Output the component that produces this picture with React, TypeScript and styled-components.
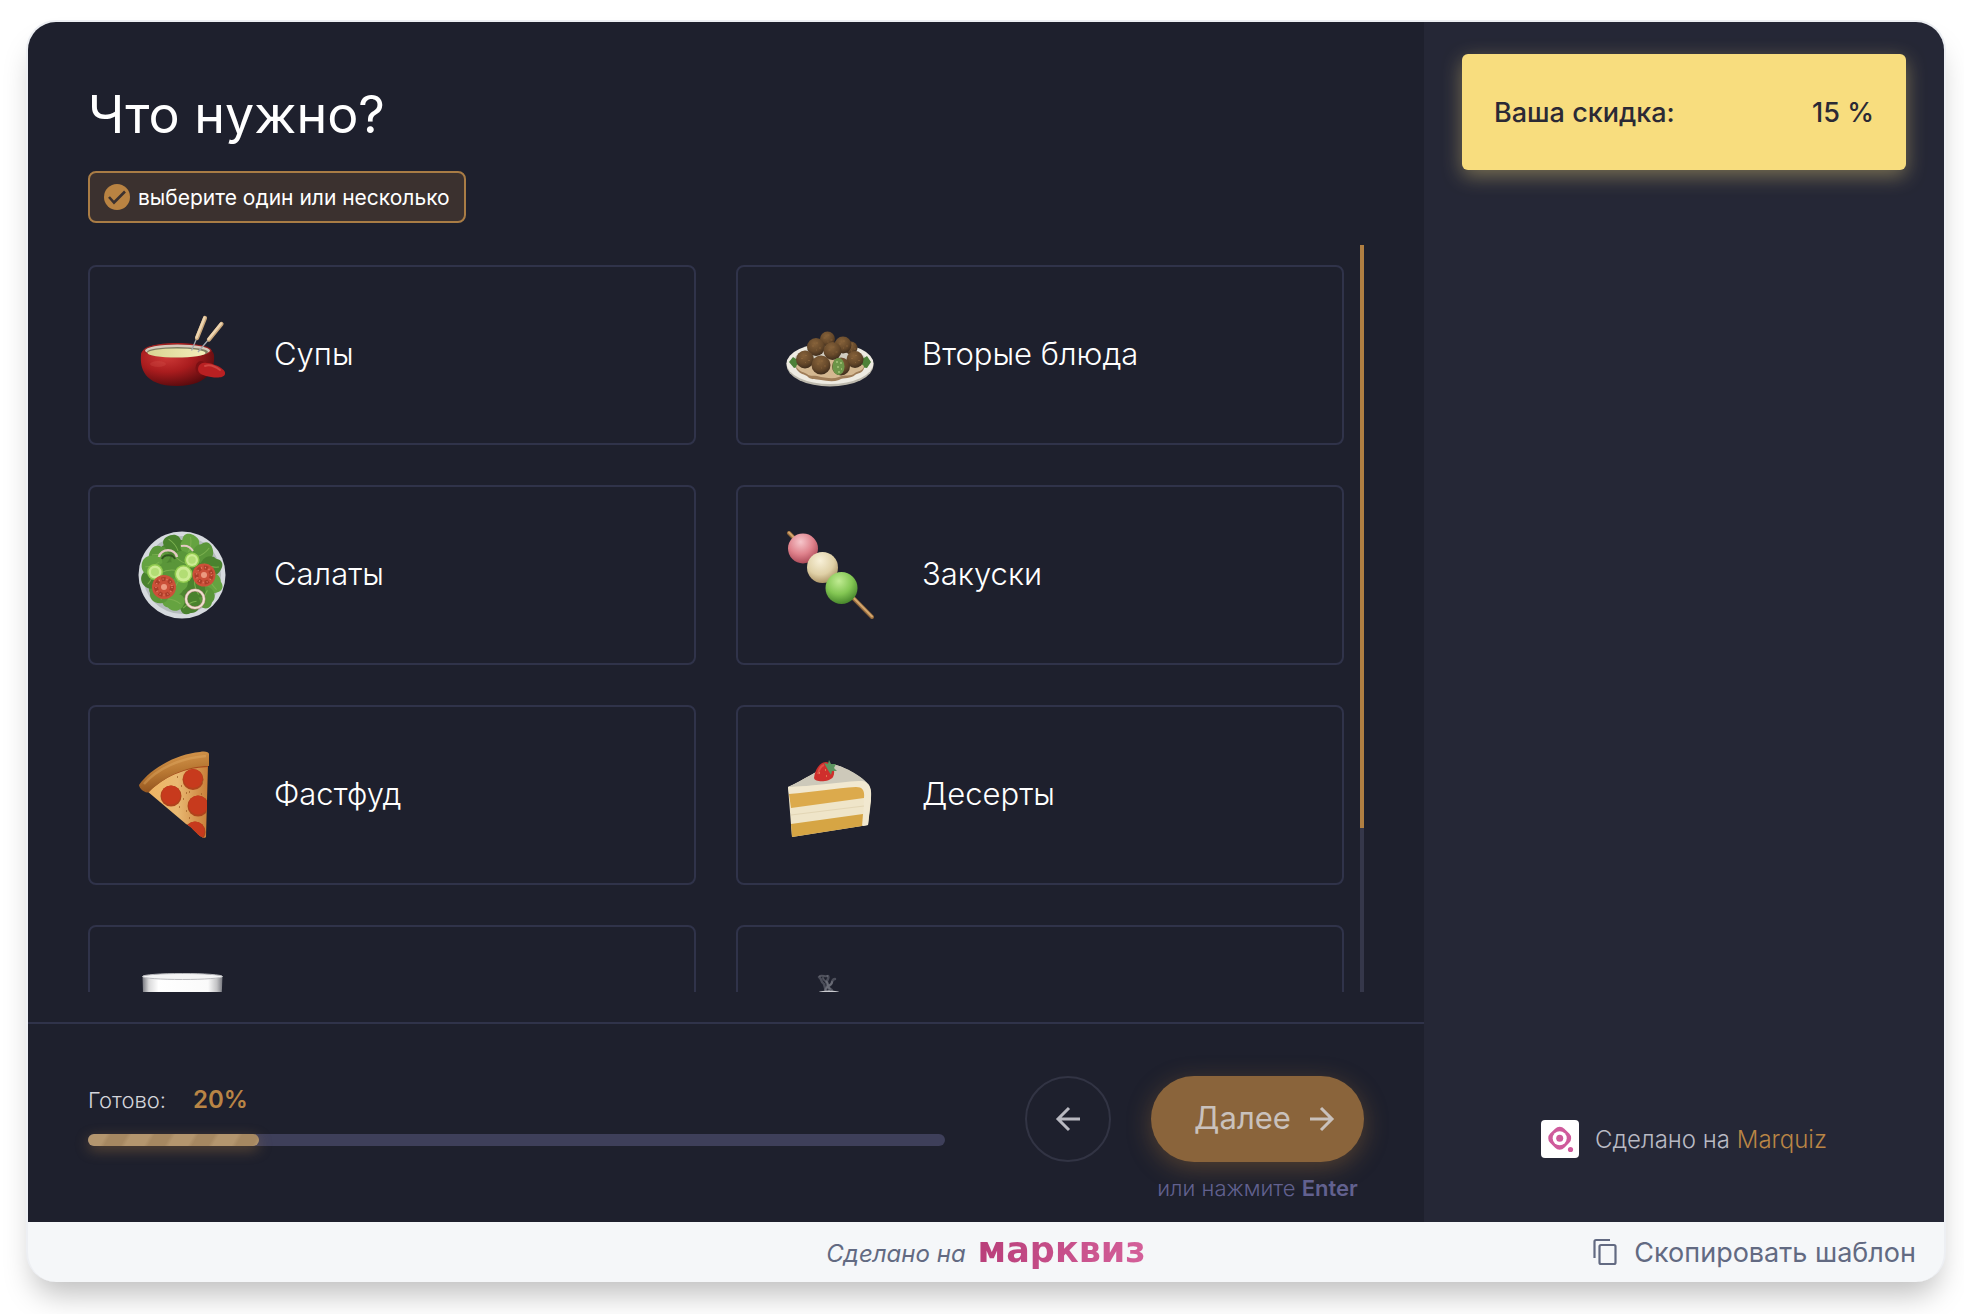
import React, { useState } from 'react';
import styled, { createGlobalStyle } from 'styled-components';

const color = {
  main: '#1e202d',
  side: '#252736',
  line: '#30334a',
  gold: '#b98545',
  muted: '#b9bac4',
  hint: '#62618f',
  slate: '#626a82',
};

const GlobalStyle = createGlobalStyle`
  * { box-sizing: border-box; }
  body {
    margin: 0;
    background: #fff;
    font-family: Inter, "Liberation Sans", sans-serif;
  }
  button { font-family: inherit; cursor: pointer; }
`;

const Page = styled.div`
  display: flex;
  height: 100vh;
  min-height: 700px;
  padding: 20px 18px 32px 26px;
`;

const Window = styled.div`
  flex: 1;
  min-width: 0;
  display: flex;
  flex-direction: column;
  overflow: hidden;
  border: 2px solid #edeff3;
  border-bottom: 0;
  border-radius: 30px;
  background: #f5f7f9;
  box-shadow: 0 20px 30px -8px rgba(0, 0, 0, 0.26);
`;

const Quiz = styled.div`
  flex: 1;
  min-height: 0;
  display: grid;
  grid-template-columns: minmax(0, 1fr) 520px;
`;

const Main = styled.main`
  min-height: 0;
  display: flex;
  flex-direction: column;
  background: ${color.main};
`;

const Question = styled.section`
  flex: 1;
  min-height: 0;
  display: flex;
  flex-direction: column;
  align-items: flex-start;
  padding: 60px 60px 30px;
`;

const Title = styled.h1`
  margin: 0 0 24px;
  font-size: 52px;
  font-weight: 400;
  line-height: 65px;
  color: #fff;
`;

const Hint = styled.div`
  display: flex;
  align-items: center;
  gap: 8px;
  height: 52px;
  margin-bottom: 22px;
  padding: 0 14px;
  border: 2px solid #a97c45;
  border-radius: 8px;
  background: #3b312f;
  font-size: 21px;
  color: #fff;
  svg { flex: none; }
`;

const ScrollBox = styled.div`
  align-self: stretch;
  flex: 1;
  min-height: 0;
  display: flex;
  gap: 16px;
`;

const Options = styled.div`
  flex: 1;
  display: grid;
  grid-template-columns: 1fr 1fr;
  grid-auto-rows: 180px;
  gap: 40px;
  padding: 20px 0;
  overflow-y: auto;
  scrollbar-width: none;
`;

const Track = styled.div`
  width: 4px;
  background: #35374a;
`;

const Thumb = styled.div`
  height: 78%;
  background: #b07f42;
`;

const Option = styled.label`
  display: flex;
  align-items: center;
  gap: 48px;
  padding: 0 48px;
  border: 2px solid ${color.line};
  border-radius: 8px;
  font-size: 31px;
  font-weight: 300;
  color: #fff;
  cursor: pointer;
  &:has(input:checked) { border-color: ${color.gold}; }
`;

const OptionText = styled.span`
  padding-bottom: 4px;
`;

const HiddenCheck = styled.input`
  position: absolute;
  width: 1px;
  height: 1px;
  margin: 0;
  opacity: 0;
  pointer-events: none;
`;

const Picture = styled.svg`
  flex: none;
  width: 88px;
  height: 88px;
`;

const Nav = styled.nav`
  display: flex;
  align-items: flex-start;
  padding: 52px 60px 20px;
  border-top: 2px solid ${color.line};
`;

const Progress = styled.div`
  flex: 1;
  margin-right: 80px;
  padding-top: 8px;
`;

const ProgressText = styled.div`
  display: flex;
  align-items: baseline;
  gap: 27px;
  margin-bottom: 18px;
  font-size: 22px;
  font-weight: 300;
  line-height: 32px;
  color: #d4d5db;
`;

const Percent = styled.strong`
  font-size: 24px;
  font-weight: 600;
  color: ${color.gold};
`;

const Bar = styled.div`
  height: 12px;
  border-radius: 6px;
  background: #3e3f5a;
`;

const BarFill = styled.div`
  height: 100%;
  border-radius: 6px;
  background: repeating-linear-gradient(120deg, #b4966e 0 16px, #a68861 20px 34px, #b4966e 38px);
  box-shadow: 0 4px 14px rgba(185, 133, 69, 0.4);
`;

const BackButton = styled.button`
  display: grid;
  place-items: center;
  width: 86px;
  height: 86px;
  margin-right: 40px;
  padding: 0;
  border: 2px solid #323444;
  border-radius: 50%;
  background: transparent;
  color: #b9b9c1;
`;

const NextBlock = styled.div`
  display: flex;
  flex-direction: column;
  align-items: center;
  gap: 12px;
`;

const NextButton = styled.button`
  display: flex;
  align-items: center;
  justify-content: center;
  gap: 18px;
  width: 213px;
  height: 86px;
  padding: 0 14px 0 28px;
  border: 0;
  border-radius: 43px;
  background: #8a643b;
  box-shadow: 0 6px 24px rgba(185, 125, 55, 0.34);
  font-size: 31px;
  font-weight: 400;
  color: #c9c1bc;
  svg { flex: none; }
`;

const EnterHint = styled.div`
  font-size: 22px;
  font-weight: 300;
  line-height: 28px;
  white-space: nowrap;
  color: ${color.hint};
  strong { font-weight: 600; }
`;

const Side = styled.aside`
  display: flex;
  flex-direction: column;
  align-items: center;
  justify-content: space-between;
  padding: 32px 38px 64px;
  background: ${color.side};
`;

const Discount = styled.div`
  align-self: stretch;
  display: flex;
  align-items: center;
  justify-content: space-between;
  height: 116px;
  padding: 0 32px;
  border-radius: 6px;
  background: #f8dd7e;
  box-shadow: 0 6px 20px rgba(248, 221, 126, 0.4);
  font-size: 27px;
  font-weight: 500;
  color: #2b2935;
`;

const Brand = styled.div`
  display: flex;
  align-items: center;
  gap: 16px;
  font-size: 24px;
  font-weight: 300;
  color: ${color.muted};
  a { color: ${color.gold}; text-decoration: none; }
`;

const Footer = styled.footer`
  display: grid;
  grid-template-columns: 1fr auto 1fr;
  align-items: center;
  height: 60px;
  padding: 0 28px;
  color: ${color.slate};
`;

const MadeWith = styled.div`
  grid-column: 2;
  display: flex;
  align-items: baseline;
  gap: 12px;
  padding-bottom: 4px;
  font-size: 24px;
  font-style: italic;
`;

const Wordmark = styled.a`
  font-family: "DejaVu Sans", sans-serif;
  font-size: 35px;
  font-style: normal;
  font-weight: 700;
  line-height: 42px;
  text-decoration: none;
  background: linear-gradient(90deg, #b93f7a, #d4609a);
  background-clip: text;
  color: transparent;
`;

const CopyButton = styled.button`
  justify-self: end;
  display: flex;
  align-items: center;
  gap: 16px;
  padding: 0;
  border: 0;
  background: none;
  font-size: 27px;
  color: ${color.slate};
`;

function Arrow({ back }: { back?: boolean }) {
  return (
    <svg width="26" height="26" viewBox="0 0 26 26" fill="none" stroke="currentColor" strokeWidth="3">
      {back ? <path d="M14 2 3 13l11 11M3 13h22" /> : <path d="m12 2 11 11-11 11M23 13H1" />}
    </svg>
  );
}

function CheckMark() {
  return (
    <svg width="26" height="26" viewBox="0 0 26 26">
      <circle cx="13" cy="13" r="13" fill="#b98342" />
      <path d="m5 13 5 5.500L21 7.500" fill="none" stroke="#3b312f" strokeWidth="2.600" />
    </svg>
  );
}

function Soup() {
  return (
    <Picture viewBox="0 0 88 88">
      <defs>
        <radialGradient id="pot" cx="0.35" cy="0.3" r="0.75">
          <stop offset="0" stopColor="#cf3b38" />
          <stop offset="0.5" stopColor="#a91c1e" />
          <stop offset="1" stopColor="#560a0d" />
        </radialGradient>
        <linearGradient id="broth" x1="0" x2="1">
          <stop offset="0" stopColor="#d9d592" />
          <stop offset="1" stopColor="#f3eebb" />
        </linearGradient>
      </defs>
      <path d="M3 44c0-8 15-12 36-12s36 4 37 12c1 11-3 31-37 31S2 56 3 44Z" fill="url(#pot)" />
      <ellipse cx="39.500" cy="39.500" rx="34" ry="7" fill="#9d2020" />
      <ellipse cx="39.500" cy="39.500" rx="32.500" ry="6" fill="#d5c9bb" />
      <ellipse cx="39.500" cy="41" rx="30.500" ry="5" fill="#7f7d60" />
      <ellipse cx="38.500" cy="42" rx="29" ry="4.500" fill="url(#broth)" />
      <path d="m53.500 39.500 6-14M60 41l11-13" stroke="#a2a5ac" strokeWidth="1.300" />
      <path d="m59 27 8-20M71 28.500 83.500 13" stroke="#c9a67a" strokeWidth="4.200" strokeLinecap="round" />
      <path d="m58.500 26.500 8-20M70.500 28 83 12.500" stroke="#edd5b0" strokeWidth="2.500" strokeLinecap="round" />
      <ellipse cx="63" cy="57" rx="5.500" ry="7" fill="#7c1014" />
      <path d="M60 58c1-8 9-7 17-4 6 2 11 6 10 9-1 4-8 4-14 3-7-1-13-3-13-8Z" fill="#b92022" />
      <path d="M67 55c5-2 11 1 15 4" stroke="#cf4440" strokeWidth="2" fill="none" strokeLinecap="round" />
      <ellipse cx="20" cy="53" rx="8" ry="3" fill="#e0635c" opacity="0.2" />
    </Picture>
  );
}

const balls = [
  [65, 37, 6.5], [41.5, 28, 7.5], [57, 34, 8.5], [30, 36, 9], [46.5, 40, 9],
  [19, 48.5, 9], [69, 48.5, 8.5], [35, 54, 9.5],
];

function Meatballs() {
  return (
    <Picture viewBox="0 0 88 88">
      <defs>
        <radialGradient id="meat" cx="0.42" cy="0.3" r="0.75">
          <stop offset="0" stopColor="#86623a" />
          <stop offset="0.6" stopColor="#65482a" />
          <stop offset="1" stopColor="#38281a" />
        </radialGradient>
      </defs>
      <ellipse cx="44" cy="54" rx="43.500" ry="21.500" fill="#bdb9ad" />
      <ellipse cx="44" cy="52.500" rx="43.500" ry="20.500" fill="#eeebe2" />
      <ellipse cx="44" cy="51" rx="37" ry="16" fill="#d0ccc0" />
      <path d="m3 51 4-5 3 2 5-3v10l-7 2ZM85 51l-4-6-3 2-4-3v12l7 1Z" fill="#4d8138" />
      <path d="M10 57c7-10 60-10 68 0-1 5-6 5-9 7-4 4-11 2-16 5-6 2-12 1-18 0-5-1-11 0-14-4-4-2-9-3-11-8Z" fill="#9f7d58" />
      <path d="M10 55c7-9 60-9 68 0-1 5-6 5-9 7-4 4-11 1-16 4-6 2-12 1-18 0-5-2-11 0-14-3-4-2-9-3-11-8Z" fill="#d4b891" />
      {balls.map(([x, y, r]) => (
        <g key={`${x}-${y}`}>
          <circle cx={x} cy={y} r={r} fill="url(#meat)" />
          <path d={`M${x - 4} ${y - 1}h2m2-3h2m1 5h2m-5 2h1`} stroke="#9b7142" strokeWidth="1" opacity="0.5" />
        </g>
      ))}
      <circle cx="55" cy="55.500" r="9" fill="url(#meat)" />
      <ellipse cx="52.500" cy="55.500" rx="6" ry="8.500" fill="#6c9548" />
      <path d="M50 51h2m2 1h2m-5 4h2m2 2h1m-4 3h2" stroke="#a5c47b" strokeWidth="1.500" />
    </Picture>
  );
}

const leaves = [
  [22, 24], [36, 14], [52, 14], [65, 22], [73, 35], [74, 52], [67, 66], [52, 73],
  [36, 70], [21, 62], [13, 47], [14, 34], [44, 30], [58, 56], [40, 52], [30, 40],
];

function Salad() {
  return (
    <Picture viewBox="0 0 88 88">
      <circle cx="44" cy="44" r="43.500" fill="#d6dade" />
      <circle cx="44" cy="44" r="39" fill="#b5bcbd" />
      <circle cx="44" cy="43" r="34" fill="#4d8530" />
      {leaves.map(([x, y], i) => (
        <g key={i} transform={`rotate(${i * 47} ${x} ${y})`}>
          <path
            d={`M${x - 11} ${y}c2-8 7-11 13-8 8 0 10 6 8 11-3 7-10 8-14 5-5 0-8-3-7-8Z`}
            fill={['#5a9639', '#4a822e', '#65a340'][i % 3]}
          />
          <path d={`M${x - 8} ${y}q8-2 15 1`} stroke="#7bb04f" strokeWidth="1" fill="none" />
        </g>
      ))}
      <path d="M21 26c2-9 16-9 18 0" stroke="#e4c9c4" strokeWidth="2.500" fill="none" />
      <path d="M24 28c2-5 11-5 13 0" stroke="#31551f" strokeWidth="2" fill="none" />
      <path d="M43 15c5-1 9 0 12 5" stroke="#e4c9c4" strokeWidth="2" fill="none" />
      {[[17, 41, 8], [54, 29, 7.5], [45.5, 43, 9]].map(([x, y, r]) => (
        <g key={x}>
          <circle cx={x} cy={y} r={r} fill="#92cc4f" />
          <circle cx={x} cy={y} r={r - 1.5} fill="#cdec94" />
          <circle cx={x} cy={y} r={r / 2} fill="#b2dd74" />
        </g>
      ))}
      {[[26, 56, 12], [66, 44, 11.5]].map(([x, y, r]) => (
        <g key={x}>
          <circle cx={x} cy={y} r={r} fill="#cb5039" />
          <circle cx={x} cy={y} r={r - 4} fill="none" stroke="#ab3d29" strokeWidth="4" strokeDasharray="4 3" />
          <circle cx={x} cy={y} r={r - 4} fill="none" stroke="#e0826a" strokeWidth="1.500" strokeDasharray="1 3" />
          <circle cx={x} cy={y} r="3" fill="#ec9a80" />
        </g>
      ))}
      <circle cx="57" cy="68" r="9" fill="none" stroke="#bd8f8f" strokeWidth="3" />
      <circle cx="57" cy="68" r="9" fill="none" stroke="#efe2cf" strokeWidth="2" />
    </Picture>
  );
}

function Dango() {
  return (
    <Picture viewBox="0 0 88 88">
      <defs>
        <radialGradient id="pink" cx="0.42" cy="0.28" r="0.75">
          <stop offset="0" stopColor="#f6c6cb" /><stop offset="0.55" stopColor="#df828c" /><stop offset="1" stopColor="#a94655" />
        </radialGradient>
        <radialGradient id="cream" cx="0.42" cy="0.28" r="0.75">
          <stop offset="0" stopColor="#f8f0d8" /><stop offset="0.6" stopColor="#dfd0a6" /><stop offset="1" stopColor="#a99062" />
        </radialGradient>
        <radialGradient id="green" cx="0.42" cy="0.28" r="0.75">
          <stop offset="0" stopColor="#c0eb92" /><stop offset="0.55" stopColor="#83c653" /><stop offset="1" stopColor="#438229" />
        </radialGradient>
      </defs>
      <path d="m3 2 83 84" stroke="#93683b" strokeWidth="4" strokeLinecap="round" />
      <path d="m3 1.500 83 84" stroke="#d2a56c" strokeWidth="2" strokeLinecap="round" />
      <circle cx="17" cy="17.500" r="15" fill="url(#pink)" />
      <circle cx="36.500" cy="36.500" r="15.500" fill="url(#cream)" />
      <circle cx="55.500" cy="57" r="16" fill="url(#green)" />
    </Picture>
  );
}

function Pizza() {
  return (
    <Picture viewBox="0 0 88 88">
      <defs>
        <linearGradient id="crust" x1="0.3" y1="0" x2="0.55" y2="1">
          <stop offset="0" stopColor="#d99b50" /><stop offset="0.5" stopColor="#b87732" /><stop offset="1" stopColor="#8b4d1b" />
        </linearGradient>
        <linearGradient id="cheese" x1="0" x2="1">
          <stop offset="0" stopColor="#f0b563" /><stop offset="0.5" stopColor="#e9b972" /><stop offset="1" stopColor="#c97e38" />
        </linearGradient>
        <clipPath id="slice"><path d="M9 40C25 24 45 14 70 13l-2 73c-2 2-4 0-6-1-5-4-8-9-14-12Z" /></clipPath>
      </defs>
      <path d="M9 40C25 24 45 14 70 13l-2 73c-2 2-4 0-6-1-5-4-8-9-14-12Z" fill="url(#cheese)" />
      <g clipPath="url(#slice)">
        <path d="M8 42c17-17 36-26 64-27" stroke="#a84c1c" strokeWidth="2" fill="none" />
        {[[55, 27.5], [33, 44], [60, 54], [57, 80]].map(([x, y]) => (
          <g key={y}>
            <circle cx={x} cy={y + 1} r="10.500" fill="#b0431c" />
            <circle cx={x} cy={y} r="9.500" fill="#c73a1d" />
          </g>
        ))}
        <path d="M43 35h1m4 7h1m-4 6h1m-5 8h1m6 4h1m2 7h1m11-24h1m-21-8h1m26 27h1m-20-21h1m-13-15h1m24 5h1" stroke="#a2632a" strokeWidth="1.300" />
      </g>
      <path d="M1 34C12 18 38 3 62 1c5-1 9 0 9 2v12C48 15 27 25 11 41c-4 2-10-4-10-7Z" fill="url(#crust)" />
      <path d="M6 33C19 18 42 7 68 5" stroke="#e8b46d" strokeWidth="2.500" fill="none" opacity="0.35" />
    </Picture>
  );
}

function Cake() {
  return (
    <Picture viewBox="0 0 88 88">
      <path d="M2 36c16-7 30-18 46-22 5-1 30 12 35 21 3 5 2 8 2 15l-3 24-76 12Z" fill="#efe5c9" />
      <path d="M2 36c16-7 30-18 46-22 5-1 27 10 33 18-24 1-53 3-79 4Z" fill="#cdc9ba" />
      <path d="M2 36c22 0 56-6 74-6 8 1 9 7 9 14l-3 30-5 1 1-30c0-6-3-9-9-9-20 1-46 6-66 7Z" fill="#f1e8d0" />
      <path d="M3 43c23-2 48-6 67-7 6 0 9 3 8 11L5 57Z" fill="#dcaa4c" />
      <path d="m5 73 72-10-1 12L6 86Z" fill="#d6a544" />
      <path d="m5 64 73-9" stroke="#e3d6b5" strokeWidth="1" />
      <path d="M28 27c1-9 6-16 12-16 7 1 10 9 7 15-3 5-18 6-19 1Z" fill="#cf2f2c" />
      <path d="M32 23c1-5 3-8 6-9" stroke="#de5147" strokeWidth="2" fill="none" />
      <path d="M33 22h1m5-3h1m0 6h1m3-5h1" stroke="#f0c070" strokeWidth="1" />
      <path d="m38 12 4 1 1-4 2 4 5 0-2 4 3 3-5 0-1 4-3-5Z" fill="#5c9460" />
    </Picture>
  );
}

function Milk() {
  return (
    <Picture viewBox="0 0 88 88">
      <defs>
        <linearGradient id="glass" x1="0" x2="1">
          <stop offset="0" stopColor="#77787f" /><stop offset="0.08" stopColor="#d9d9da" /><stop offset="0.2" stopColor="#fff" />
          <stop offset="0.82" stopColor="#fafafa" /><stop offset="0.93" stopColor="#c2c2c4" /><stop offset="1" stopColor="#77787f" />
        </linearGradient>
      </defs>
      <path d="M4.500 5 7 86h74l3.500-81Z" fill="url(#glass)" />
      <ellipse cx="44.500" cy="5.500" rx="40" ry="3" fill="#f4f4f5" stroke="#b8b9bd" strokeWidth="1" />
    </Picture>
  );
}

function Steam() {
  return (
    <Picture viewBox="0 0 88 88">
      <g fill="none" stroke="#8e909a" strokeLinecap="round">
        <path d="M33 6c3 2 2 5 4 6s1 4 3 7M42 5c2 3-3 5-1 8s-2 4-1 6M49 8c-4 0-2 5-5 6s1 4-1 5" strokeWidth="2.500" opacity="0.4" />
        <path d="M34 5c3-1 5 1 7 0M37 7c0 4 6 3 5 7s3 3 4 5M46 11c1 3-6 4-7 8" strokeWidth="2" opacity="0.45" />
      </g>
      <ellipse cx="43" cy="22" rx="11" ry="2.500" fill="#c9cacf" />
    </Picture>
  );
}

function MarquizLogo() {
  return (
    <svg width="38" height="38" viewBox="0 0 38 38">
      <rect width="38" height="38" rx="4" fill="#fff" />
      <rect x="8.700" y="8.200" width="20" height="20" rx="6.500" transform="rotate(45 18.700 18.200)" fill="#cf5a9b" />
      <circle cx="18.700" cy="18.200" r="7" fill="#fff" />
      <circle cx="18.700" cy="18.200" r="3.500" fill="#cf5a9b" />
      <circle cx="29.500" cy="29.500" r="2.600" fill="#cf5a9b" />
    </svg>
  );
}

function CopyIcon() {
  return (
    <svg width="26" height="28" viewBox="0 0 26 28" fill="none" stroke="currentColor" strokeWidth="2.200">
      <path d="M2.500 20V3.500q0-1.500 1.500-1.500h14" />
      <rect x="7.500" y="7" width="16" height="19" rx="1.500" />
    </svg>
  );
}

const options: { id: string; text?: string; picture: React.ReactNode }[] = [
  { id: 'soups', text: 'Супы', picture: <Soup /> },
  { id: 'mains', text: 'Вторые блюда', picture: <Meatballs /> },
  { id: 'salads', text: 'Салаты', picture: <Salad /> },
  { id: 'snacks', text: 'Закуски', picture: <Dango /> },
  { id: 'fastfood', text: 'Фастфуд', picture: <Pizza /> },
  { id: 'desserts', text: 'Десерты', picture: <Cake /> },
  { id: 'drinks', picture: <Milk /> },
  { id: 'other', picture: <Steam /> },
];

export default function App() {
  const [progress] = useState(20);

  return (
    <>
      <GlobalStyle />
      <Page>
        <Window>
          <Quiz>
            <Main>
              <Question>
                <Title>Что нужно?</Title>
                <Hint>
                  <CheckMark />
                  выберите один или несколько
                </Hint>
                <ScrollBox>
                  <Options>
                    {options.map((option) => (
                      <Option key={option.id}>
                        <HiddenCheck type="checkbox" name="dish" value={option.id} />
                        {option.picture}
                        <OptionText>{option.text}</OptionText>
                      </Option>
                    ))}
                  </Options>
                  <Track>
                    <Thumb />
                  </Track>
                </ScrollBox>
              </Question>
              <Nav>
                <Progress>
                  <ProgressText>
                    Готово:
                    <Percent>{progress}%</Percent>
                  </ProgressText>
                  <Bar>
                    <BarFill style={{ width: `${progress}%` }} />
                  </Bar>
                </Progress>
                <BackButton type="button" aria-label="Назад">
                  <Arrow back />
                </BackButton>
                <NextBlock>
                  <NextButton type="button">
                    <OptionText>Далее</OptionText>
                    <Arrow />
                  </NextButton>
                  <EnterHint>
                    или нажмите <strong>Enter</strong>
                  </EnterHint>
                </NextBlock>
              </Nav>
            </Main>
            <Side>
              <Discount>
                <span>Ваша скидка:</span>
                <span>15 %</span>
              </Discount>
              <Brand>
                <MarquizLogo />
                <span>
                  Сделано на <a href="#marquiz">Marquiz</a>
                </span>
              </Brand>
            </Side>
          </Quiz>
          <Footer>
            <MadeWith>
              Сделано на
              <Wordmark href="#marquiz">марквиз</Wordmark>
            </MadeWith>
            <CopyButton type="button">
              <CopyIcon />
              Скопировать шаблон
            </CopyButton>
          </Footer>
        </Window>
      </Page>
    </>
  );
}
